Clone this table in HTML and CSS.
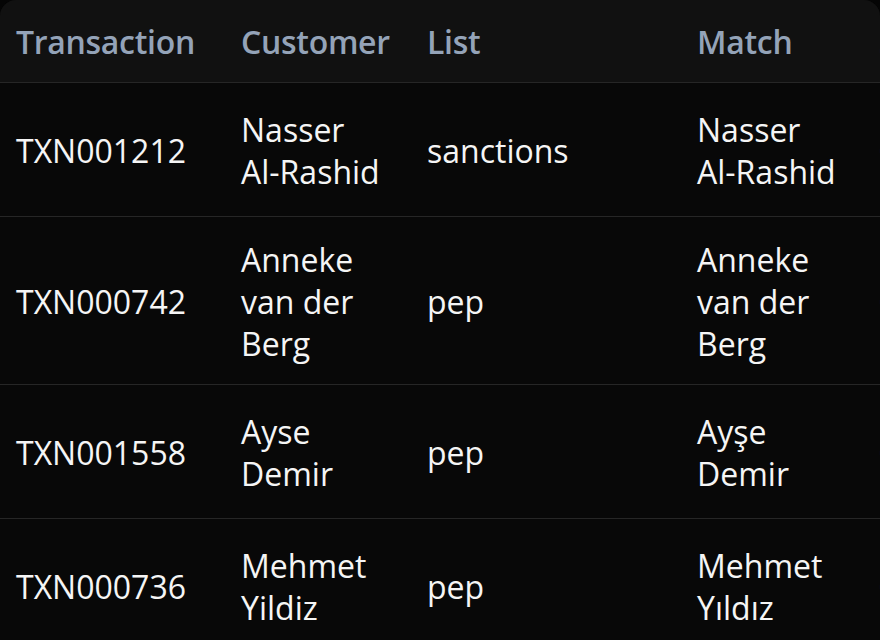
FILE: index.html
```html
<!DOCTYPE html>
<html lang="en">
<head>
<meta charset="utf-8">
<title>Screening matches</title>
<link rel="stylesheet" href="styles.css">
</head>
<body>
<div class="card">
  <table class="grid">
    <colgroup>
      <col class="c-txn"><col class="c-cust"><col class="c-list"><col class="c-match"><col class="c-score">
    </colgroup>
    <thead>
      <tr>
        <th>Transaction</th>
        <th>Customer</th>
        <th>List</th>
        <th>Match</th>
        <th>Score</th>
      </tr>
    </thead>
    <tbody>
      <tr>
        <td>TXN001212</td>
        <td>Nasser <span class="nb">Al-Rashid</span></td>
        <td>sanctions</td>
        <td>Nasser <span class="nb">Al-Rashid</span></td>
        <td>0.97</td>
      </tr>
      <tr>
        <td>TXN000742</td>
        <td>Anneke van der Berg</td>
        <td>pep</td>
        <td>Anneke van der Berg</td>
        <td>0.94</td>
      </tr>
      <tr>
        <td>TXN001558</td>
        <td>Ayse Demir</td>
        <td>pep</td>
        <td>Ayşe Demir</td>
        <td>0.91</td>
      </tr>
      <tr>
        <td>TXN000736</td>
        <td>Mehmet Yildiz</td>
        <td>pep</td>
        <td>Mehmet Yıldız</td>
        <td>0.90</td>
      </tr>
    </tbody>
  </table>
</div>
</body>
</html>
```

FILE: styles.css
```css
html, body {
  margin: 0;
  padding: 0;
  background: #050505;
}

body {
  width: 880px;
  height: 640px;
  overflow: hidden;
  font-family: "Open Sans", "Liberation Sans", sans-serif;
}

.card {
  width: 880px;
  height: 640px;
  background: #080808;
  border-radius: 16px 16px 0 0;
  overflow: hidden;
}

.grid {
  border-collapse: collapse;
  table-layout: fixed;
  width: 1100px;
}

.c-txn { width: 225px; }
.c-cust { width: 186px; }
.c-list { width: 270px; }
.c-match { width: 182px; }
.c-score { width: 237px; }

.grid th {
  height: 82px;
  padding: 0 16px;
  background: #111111;
  color: #94a3b8;
  font-size: 32px;
  font-weight: 600;
  letter-spacing: -0.3px;
  text-align: left;
  white-space: nowrap;
  border-bottom: 1px solid #262626;
}

.grid td {
  height: 92px;
  padding: 22px 16px 19px;
  color: #f5f5f5;
  font-size: 32px;
  line-height: 42px;
  vertical-align: middle;
  border-bottom: 1px solid #262626;
}

.nb {
  white-space: nowrap;
}
```
